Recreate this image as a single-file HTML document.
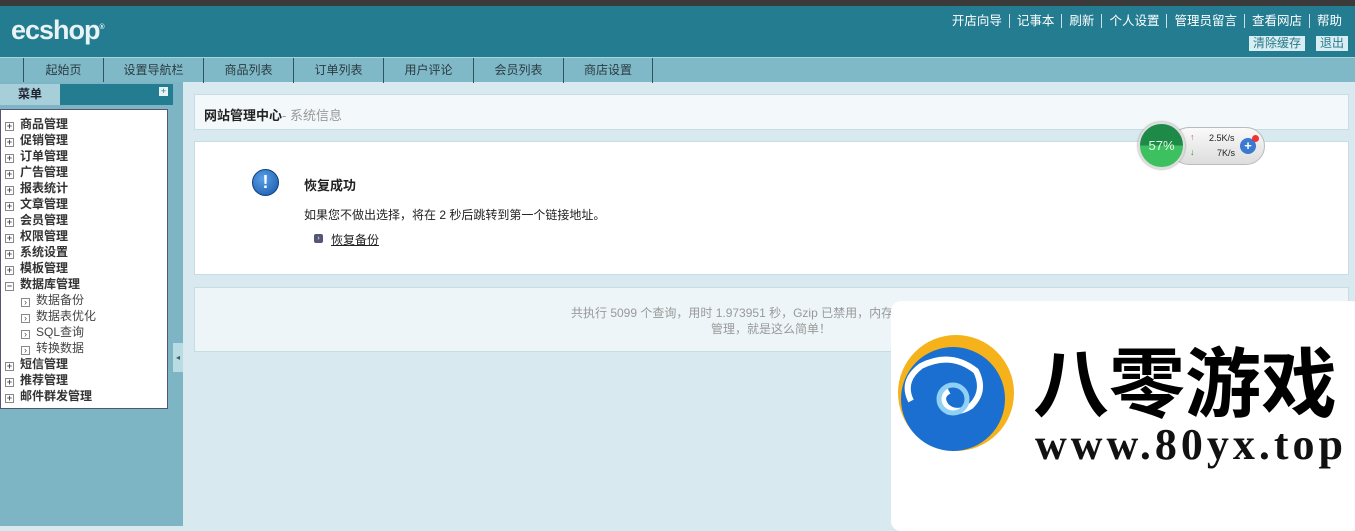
<!DOCTYPE html>
<html><head><meta charset="utf-8"><style>
*{margin:0;padding:0;box-sizing:border-box}
body{width:1355px;height:526px;overflow:hidden;position:relative;background:#d8eaf0;font-family:"Liberation Sans","Noto Sans CJK SC",sans-serif;font-size:12px;color:#222}
.abs{position:absolute}
#top{left:0;top:0;width:1355px;height:6px;background:#3a3a3a}
#hdr{left:0;top:6px;width:1355px;height:51px;background:#237c90}
#logo{left:11px;top:15px;color:#e8f3f5;font-size:27px;font-weight:bold;letter-spacing:-1px;font-family:"Liberation Sans",sans-serif}
#links{right:6px;top:10px;color:#fff;font-size:12.5px}
#links span{padding:0 7px;border-left:1px solid #cde}
#links span:first-child{border:none}
.btn{top:36px;background:#d9eef3;color:#2a7a8c;font-size:12px;padding:0 4px;height:15px;line-height:15px}
#nav{left:0;top:57px;width:1355px;height:25px;background:#7fb9c8;border-top:1px solid #a8d3df}
.tab{top:0;height:25px;line-height:24px;text-align:center;border-left:1px solid #2c5560;color:#2a3a40;font-size:12px}
#side{left:0;top:82px;width:183px;height:444px;background:#7db5c4}
#menutab{left:0;top:84px;width:60px;height:21px;background:#a6cfd9;text-align:center;line-height:20px;font-weight:bold;color:#223}
#menubar{left:60px;top:84px;width:113px;height:21px;background:#237c90}
#box{left:0;top:109px;width:168px;height:300px;background:#fff;border:1px solid #557}
.it{position:absolute;left:4px;font-weight:bold;color:#333;font-size:12px;line-height:16px}
.it i,.sub i{display:inline-block;width:9px;height:9px;border:1px solid #888;margin-right:6px;vertical-align:-1px;font-style:normal;font-size:9px;line-height:7px;text-align:center;color:#555}
.sub{position:absolute;left:20px;color:#444;font-size:12px;line-height:16px}
#pan1{left:194px;top:94px;width:1155px;height:36px;background:#f3f8fa;border:1px solid #c6dde4}
#pan2{left:194px;top:141px;width:1155px;height:134px;background:#fff;border:1px solid #c6dde4}
#pan3{left:194px;top:287px;width:1155px;height:65px;background:#eef5f8;border:1px solid #c6dde4}
#ad{left:891px;top:301px;width:470px;height:230px;background:#fff;border-radius:10px}
</style></head><body>
<div id="top" class="abs"></div>
<div id="hdr" class="abs"></div>
<div id="logo" class="abs">ecshop<sup style="font-size:7px">®</sup></div>
<div id="links" class="abs"><span>开店向导</span><span>记事本</span><span>刷新</span><span>个人设置</span><span>管理员留言</span><span>查看网店</span><span>帮助</span></div>
<div class="abs btn" style="left:1249px">清除缓存</div>
<div class="abs btn" style="left:1316px">退出</div>
<div id="nav" class="abs">
<div class="abs tab" style="left:23px;width:80px">起始页</div>
<div class="abs tab" style="left:103px;width:100px">设置导航栏</div>
<div class="abs tab" style="left:203px;width:90px">商品列表</div>
<div class="abs tab" style="left:293px;width:90px">订单列表</div>
<div class="abs tab" style="left:383px;width:90px">用户评论</div>
<div class="abs tab" style="left:473px;width:90px">会员列表</div>
<div class="abs tab" style="left:563px;width:90px;border-right:1px solid #2c5560">商店设置</div>
</div>
<div id="side" class="abs"></div>
<div id="menutab" class="abs">菜单</div>
<div id="menubar" class="abs"><span style="position:absolute;right:5px;top:3px;width:9px;height:9px;background:#e8f3f5;font-size:9px;line-height:9px;text-align:center;color:#237c90">+</span></div>
<div class="abs" style="left:173px;top:343px;width:10px;height:29px;background:#b8dbe4;font-size:8px;line-height:29px;text-align:center;color:#456">◂</div>
<div id="box" class="abs">
<div class="it" style="top:6px"><i>+</i>商品管理</div>
<div class="it" style="top:22px"><i>+</i>促销管理</div>
<div class="it" style="top:38px"><i>+</i>订单管理</div>
<div class="it" style="top:54px"><i>+</i>广告管理</div>
<div class="it" style="top:70px"><i>+</i>报表统计</div>
<div class="it" style="top:86px"><i>+</i>文章管理</div>
<div class="it" style="top:102px"><i>+</i>会员管理</div>
<div class="it" style="top:118px"><i>+</i>权限管理</div>
<div class="it" style="top:134px"><i>+</i>系统设置</div>
<div class="it" style="top:150px"><i>+</i>模板管理</div>
<div class="it" style="top:166px"><i>−</i>数据库管理</div>
<div class="sub" style="top:182px"><i>›</i>数据备份</div>
<div class="sub" style="top:198px"><i>›</i>数据表优化</div>
<div class="sub" style="top:214px"><i>›</i>SQL查询</div>
<div class="sub" style="top:230px"><i>›</i>转换数据</div>
<div class="it" style="top:246px"><i>+</i>短信管理</div>
<div class="it" style="top:262px"><i>+</i>推荐管理</div>
<div class="it" style="top:278px"><i>+</i>邮件群发管理</div>
</div>
<div id="pan1" class="abs"><span style="position:absolute;left:9px;top:10px;font-weight:bold;font-size:13px">网站管理中心<span style="color:#999;font-weight:normal">- 系统信息</span></span></div>
<div id="pan2" class="abs">
<div class="abs" style="left:57px;top:27px;width:27px;height:27px;border-radius:50%;background:radial-gradient(circle at 40% 35%,#5aa0e8,#1556a8);border:1px solid #0d3d80;color:#fff;font-weight:bold;font-size:18px;text-align:center;line-height:25px">!</div>
<div class="abs" style="left:109px;top:33px;font-weight:bold;font-size:13px">恢复成功</div>
<div class="abs" style="left:109px;top:64px;font-size:12px">如果您不做出选择，将在 2 秒后跳转到第一个链接地址。</div>
<div class="abs" style="left:119px;top:92px;width:9px;height:9px;background:#557;border-radius:2px;color:#fff;font-size:7px;line-height:9px;text-align:center">›</div>
<div class="abs" style="left:136px;top:89px;text-decoration:underline;font-size:12px">恢复备份</div>
</div>
<div id="pan3" class="abs">
<div class="abs" style="left:376px;top:16px;color:#999;font-size:12px;white-space:nowrap">共执行 5099 个查询，用时 1.973951 秒，Gzip 已禁用，内存</div>
<div class="abs" style="left:516px;top:32px;color:#999;font-size:12px">管理，就是这么简单！</div>
</div>
<div class="abs" style="left:1170px;top:127px;width:95px;height:38px;border-radius:19px;background:linear-gradient(#fafafa,#ddd);border:1px solid #bbb"></div>
<div class="abs" style="left:1138px;top:122px;width:47px;height:47px;border-radius:50%;background:linear-gradient(#1d8a48 50%,#3cc060 50%);border:2px solid #ddd;box-shadow:0 0 2px #888;color:#e8ffe8;font-size:13px;text-align:center;line-height:43px">57%</div>
<div class="abs" style="left:1190px;top:132px;font-size:9px;color:#d55">↑</div>
<div class="abs" style="left:1190px;top:147px;font-size:9px;color:#393">↓</div>
<div class="abs" style="left:1209px;top:133px;font-size:9px">2.5K/s</div>
<div class="abs" style="left:1217px;top:148px;font-size:9px">7K/s</div>
<div class="abs" style="left:1240px;top:138px;width:16px;height:16px;border-radius:50%;background:#3a7ad0;color:#fff;font-size:13px;line-height:16px;text-align:center;font-weight:bold">+</div>
<div class="abs" style="left:1252px;top:135px;width:7px;height:7px;border-radius:50%;background:#e33"></div>
<div id="ad" class="abs">
<svg class="abs" style="left:0;top:20px" width="135" height="150" viewBox="0 0 135 150">
<circle cx="65" cy="72" r="58" fill="#f6b21a"/>
<circle cx="62" cy="78" r="52" fill="#1a6fd0"/>
<path d="M20 80 Q10 60 30 45 Q60 30 85 50 Q95 70 80 85 Q65 95 55 85 Q48 75 58 70" fill="none" stroke="#fff" stroke-width="6"/>
<circle cx="62" cy="78" r="14" fill="none" stroke="#8fd0f5" stroke-width="5"/>
<circle cx="62" cy="78" r="5" fill="#1a6fd0"/>
</svg>
<div class="abs" style="left:142px;top:34px;font-size:76px;font-weight:bold;font-family:'Noto Sans CJK SC',sans-serif;line-height:86px;color:#000;white-space:nowrap">八零游戏</div>
<div class="abs" style="left:144px;top:118px;font-size:44px;font-weight:bold;font-family:'Liberation Serif',serif;color:#111;letter-spacing:4px;white-space:nowrap">www.80yx.top</div>
</div>
</body></html>
